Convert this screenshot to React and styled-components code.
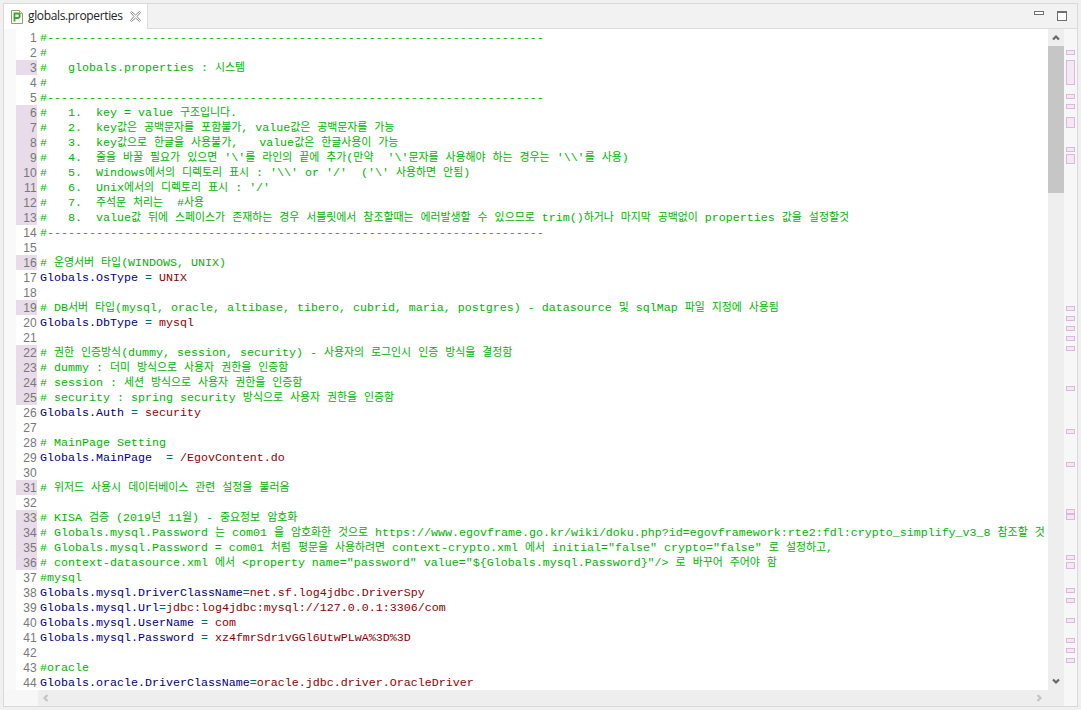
import React from "react";
import styled, { createGlobalStyle } from "styled-components";

const Global = createGlobalStyle`
  html, body { margin: 0; padding: 0; background: #f0f0f0; overflow: hidden; }
  #root { width: 1081px; height: 710px; }
`;

const Page = styled.div`
  width: 1081px;
  height: 710px;
  box-sizing: border-box;
  padding: 3px;
  background: #f0f0f0;
`;

const Frame = styled.div`
  height: 100%;
  box-sizing: border-box;
  border: 1px solid #d9d9d9;
  display: flex;
  flex-direction: column;
  background: #f7f7f7;
`;

const TabBar = styled.div`
  height: 25px;
  box-sizing: border-box;
  flex: none;
  display: flex;
  justify-content: space-between;
  background: #f2f2f2;
  border-bottom: 1px solid #dcdcdc;
`;

const Tab = styled.div`
  width: 144px;
  height: 25px;
  box-sizing: border-box;
  background: #fff;
  border-right: 1px solid #dcdcdc;
  display: flex;
  align-items: center;
  padding: 0 0 0 7px;
  gap: 5px;
  color: #222;
`;

const TabTitle = styled.span`
  font: 12px/16px "Open Sans", "Noto Sans", sans-serif;
  letter-spacing: -0.35px;
  width: 97px;
  padding-bottom: 2px;
`;

const ViewButtons = styled.div`
  display: flex;
  align-items: flex-start;
  gap: 13px;
  padding: 7px 10px 0 0;
`;

const Body = styled.div`
  flex: 1;
  min-height: 0;
  display: flex;
`;

const EditorColumn = styled.div`
  flex: 1;
  min-width: 0;
  display: flex;
  flex-direction: column;
`;

const Viewport = styled.div`
  height: 661px;
  flex: none;
  padding-top: 1px;
  box-sizing: border-box;
  overflow: hidden;
  padding-left: 12px;
  background: linear-gradient(to right, #f9f9f9 12px, #fff 12px);
`;

const Row = styled.div`
  display: flex;
  height: 15px;
  white-space: pre;
`;

const Num = styled.div`
  width: 21px;
  height: 15px;
  flex: none;
  box-sizing: border-box;
  padding-top: 1px;
  text-align: right;
  background: ${(p) => (p.$mark ? "#e8dbea" : "#fff")};
  color: #787878;
  font: 12px/15px "Liberation Sans", Arial, sans-serif;
  margin-right: 3px;
  letter-spacing: 0.25px;
`;

const Code = styled.div`
  padding-top: 1px;
  height: 15px;
  box-sizing: border-box;
  font: 11.67px/15px "Liberation Mono", monospace;
  color: ${(p) => p.$color};
  white-space: pre;
`;

const Hangul = styled.span`
  font-family: "Noto Sans CJK KR", sans-serif;
  font-size: 10.9px;
  line-height: 0;
`;

const Key = styled.span`
  color: #000080;
`;
const Eq = styled.span`
  color: #007070;
`;
const Val = styled.span`
  color: #900000;
`;

const HScroll = styled.div`
  flex: 1;
  margin-left: 34px;
  display: flex;
  align-items: center;
  justify-content: space-between;
  padding: 0 5px 0 4px;
  background: #eeeeee;
`;

const VScroll = styled.div`
  width: 16px;
  flex: none;
  background: #eeeeee;
  display: flex;
  flex-direction: column;
  padding-bottom: 16px;
  box-sizing: border-box;
`;

const ArrowBox = styled.div`
  height: 17px;
  flex: none;
  display: flex;
  align-items: center;
  justify-content: center;
`;

const Thumb = styled.div`
  height: 147px;
  flex: none;
  background: #c6c6c6;
`;

const Spacer = styled.div`
  flex: 1;
`;

const Ruler = styled.div`
  width: 13px;
  flex: none;
  background: #f7f7f7;
  position: relative;
`;

const Marker = styled.div`
  position: absolute;
  left: 2px;
  width: 9px;
  box-sizing: border-box;
  background: #f3e8f3;
  border: 1px solid #dcb9dc;
`;

const Chevron = ({ dir, color }) => {
  const vertical = dir === "up" || dir === "down";
  const d = {
    up: "M1 5.500 L4 2.500 L7 5.500",
    down: "M1 1.500 L4 4.500 L7 1.500",
    left: "M5.500 1 L2.500 4 L5.500 7",
    right: "M1.500 1 L4.500 4 L1.500 7",
  }[dir];
  return (
    <svg
      width={vertical ? 8 : 7}
      height={vertical ? 7 : 8}
      viewBox={vertical ? "0 0 8 7" : "0 0 7 8"}
      fill="none"
      stroke={color}
      strokeWidth="2.200"
    >
      <path d={d} />
    </svg>
  );
};

const FileIcon = () => (
  <svg width="12" height="14" viewBox="0 0 12 14">
    <path d="M.5.5h8l3 3v10H.5z" fill="#fdfdf4" stroke="#9a9a6e" />
    <path d="M8.500.5v3h3" fill="#e8e0b0" stroke="#b8a860" />
    <path d="M3.500 11.500V3.500h3a2.200 2.200 0 0 1 0 4.500h-3" fill="none" stroke="#3ba33b" strokeWidth="1.800" />
  </svg>
);

const CloseIcon = () => (
  <svg width="11" height="11" viewBox="0 0 11 11" fill="#fff" stroke="#8a8a8a">
    <path d="M1.500.5 5.500 4l4-3.500 1 1L7 5.500l3.500 4-1 1-4-3.500-4 3.500-1-1L4 5.500.5 1.500z" />
  </svg>
);

const MinIcon = () => (
  <svg width="10" height="4" viewBox="0 0 10 4" fill="#fff" stroke="#707070">
    <rect x=".5" y=".5" width="9" height="3" />
  </svg>
);

const MaxIcon = () => (
  <svg width="10" height="10" viewBox="0 0 10 10" fill="#fff" stroke="#707070">
    <rect x=".5" y=".5" width="9" height="9" />
    <path d="M0 1.500h10" />
  </svg>
);

const dash = "#" + "-".repeat(71);

const lines = [
  dash,
  "#",
  "#   globals.properties : 시스템",
  "#",
  dash,
  "#   1.  key = value 구조입니다.",
  "#   2.  key값은 공백문자를 포함불가, value값은 공백문자를 가능",
  "#   3.  key값으로 한글을 사용불가,   value값은 한글사용이 가능",
  "#   4.  줄을 바꿀 필요가 있으면 '\\'를 라인의 끝에 추가(만약  '\\'문자를 사용해야 하는 경우는 '\\\\'를 사용)",
  "#   5.  Windows에서의 디렉토리 표시 : '\\\\' or '/'  ('\\' 사용하면 안됨)",
  "#   6.  Unix에서의 디렉토리 표시 : '/'",
  "#   7.  주석문 처리는  #사용",
  "#   8.  value값 뒤에 스페이스가 존재하는 경우 서블릿에서 참조할때는 에러발생할 수 있으므로 trim()하거나 마지막 공백없이 properties 값을 설정할것",
  dash,
  "",
  "# 운영서버 타입(WINDOWS, UNIX)",
  "Globals.OsType = UNIX",
  "",
  "# DB서버 타입(mysql, oracle, altibase, tibero, cubrid, maria, postgres) - datasource 및 sqlMap 파일 지정에 사용됨",
  "Globals.DbType = mysql",
  "",
  "# 권한 인증방식(dummy, session, security) - 사용자의 로그인시 인증 방식을 결정함",
  "# dummy : 더미 방식으로 사용자 권한을 인증함",
  "# session : 세션 방식으로 사용자 권한을 인증함",
  "# security : spring security 방식으로 사용자 권한을 인증함",
  "Globals.Auth = security",
  "",
  "# MainPage Setting",
  "Globals.MainPage  = /EgovContent.do",
  "",
  "# 위저드 사용시 데이터베이스 관련 설정을 불러옴",
  "",
  "# KISA 검증 (2019년 11월) - 중요정보 암호화",
  "# Globals.mysql.Password 는 com01 을 암호화한 것으로 https://www.egovframe.go.kr/wiki/doku.php?id=egovframework:rte2:fdl:crypto_simplify_v3_8 참조할 것",
  '# Globals.mysql.Password = com01 처럼 평문을 사용하려면 context-crypto.xml 에서 initial="false" crypto="false" 로 설정하고,',
  '# context-datasource.xml 에서 <property name="password" value="${Globals.mysql.Password}"/> 로 바꾸어 주어야 함',
  "#mysql",
  "Globals.mysql.DriverClassName=net.sf.log4jdbc.DriverSpy",
  "Globals.mysql.Url=jdbc:log4jdbc:mysql://127.0.0.1:3306/com",
  "Globals.mysql.UserName = com",
  "Globals.mysql.Password = xz4fmrSdr1vGGl6UtwPLwA%3D%3D",
  "",
  "#oracle",
  "Globals.oracle.DriverClassName=oracle.jdbc.driver.OracleDriver",
];

const marked = new Set([3, 6, 7, 8, 9, 10, 11, 12, 13, 16, 19, 22, 23, 24, 25, 31, 33, 34, 35, 36]);

const markers = [
  [50, 5], [60, 25], [94, 5], [104, 5], [117, 11], [147, 5], [154, 10],
  [306, 5], [316, 5], [326, 5], [336, 5], [346, 5], [386, 5], [429, 5], [462, 5],
  [509, 5], [514, 6], [555, 5], [562, 7], [588, 5], [598, 5], [618, 5], [638, 5], [648, 5], [658, 5],
];

const withHangul = (text) =>
  text.split(/([\uAC00-\uD7A3]+)/).map((part, i) =>
    i % 2 ? <Hangul key={i}>{part}</Hangul> : part
  );

const LineCode = ({ text }) => {
  if (text.startsWith("#")) return <Code $color="#00b400">{withHangul(text)}</Code>;
  const m = text.match(/^([^=]*?)(\s*=\s*)(.*)$/);
  if (!m) return <Code $color="#000">{text}</Code>;
  return (
    <Code $color="#000">
      <Key>{m[1]}</Key>
      <Eq>{m[2]}</Eq>
      <Val>{m[3]}</Val>
    </Code>
  );
};

export default function App() {
  return (
    <Page>
      <Global />
      <Frame>
        <TabBar>
          <Tab>
            <FileIcon />
            <TabTitle>globals.properties</TabTitle>
            <CloseIcon />
          </Tab>
          <ViewButtons>
            <MinIcon />
            <MaxIcon />
          </ViewButtons>
        </TabBar>
        <Body>
          <EditorColumn>
            <Viewport>
              {lines.map((text, i) => (
                <Row key={i}>
                  <Num $mark={marked.has(i + 1)}>{i + 1}</Num>
                  <LineCode text={text} />
                </Row>
              ))}
            </Viewport>
            <HScroll>
              <Chevron dir="left" color="#c4c4c4" />
              <Chevron dir="right" color="#c4c4c4" />
            </HScroll>
          </EditorColumn>
          <VScroll>
            <ArrowBox>
              <Chevron dir="up" color="#666" />
            </ArrowBox>
            <Thumb />
            <Spacer />
            <ArrowBox>
              <Chevron dir="down" color="#666" />
            </ArrowBox>
          </VScroll>
          <Ruler>
            {markers.map(([top, h]) => (
              <Marker key={top} style={{ top: top - 29, height: h }} />
            ))}
          </Ruler>
        </Body>
      </Frame>
    </Page>
  );
}
